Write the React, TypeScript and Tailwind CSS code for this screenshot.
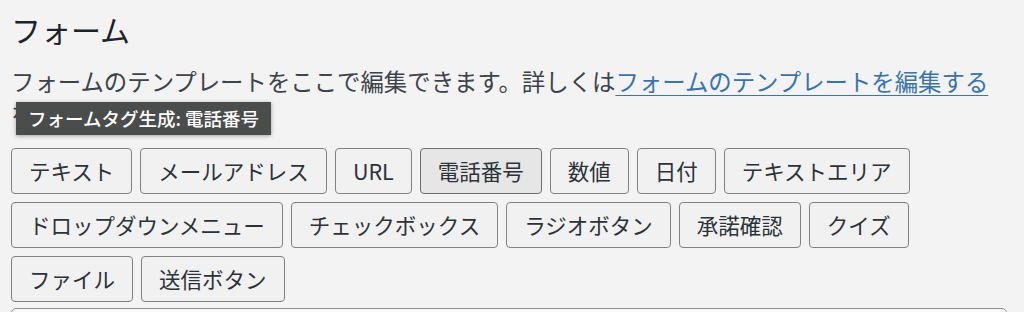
const tags = [
  'テキスト',
  'メールアドレス',
  'URL',
  '電話番号',
  '数値',
  '日付',
  'テキストエリア',
  'ドロップダウンメニュー',
  'チェックボックス',
  'ラジオボタン',
  '承諾確認',
  'クイズ',
  'ファイル',
  '送信ボタン',
];

const hovered = '電話番号';

export default function App() {
  return (
    <div
      className="relative h-[312px] overflow-hidden bg-[#f3f3f3] pl-[11px] pt-[9px] text-[#3c434a]"
      style={{ fontFamily: '"Noto Sans CJK JP", "Noto Sans", sans-serif' }}
    >
      <h2 className="text-[30px] leading-[40px] font-normal text-[#1d2327]">フォーム</h2>

      <p className="mt-[16px] w-[1000px] text-[23.4px] leading-[33px]">
        フォームのテンプレートをここで編集できます。詳しくは
        <a href="#" className="text-[#3a73b0] underline underline-offset-[4px] decoration-1">
          フォームのテンプレートを編集する
        </a>
        を参照してください。
      </p>

      <div className="mt-[17px] flex w-[996px] flex-wrap gap-[8px]">
        {tags.map((t) => (
          <button
            key={t}
            type="button"
            className={`h-[46px] rounded-[4px] border px-[17px] text-[21.5px] leading-none text-[#2c3338] ${
              t === hovered ? 'border-[#6e6e6e] bg-[#e6e6e6]' : 'border-[#828282] bg-[#f1f1f1]'
            }`}
          >
            {t}
          </button>
        ))}
      </div>

      <div className="mt-[6px] h-[200px] w-[996px] rounded-[5px] border border-[#8c8f94] bg-[#f7f7f7]" />

      {/* tooltip */}
      <div className="absolute left-[16px] top-[102px] flex h-[33px] items-center bg-[#4b4c4c] px-[12px] text-[18.5px] font-medium text-white shadow-[0_1px_4px_rgba(0,0,0,0.35)]">
        フォームタグ生成: 電話番号
      </div>
    </div>
  );
}
